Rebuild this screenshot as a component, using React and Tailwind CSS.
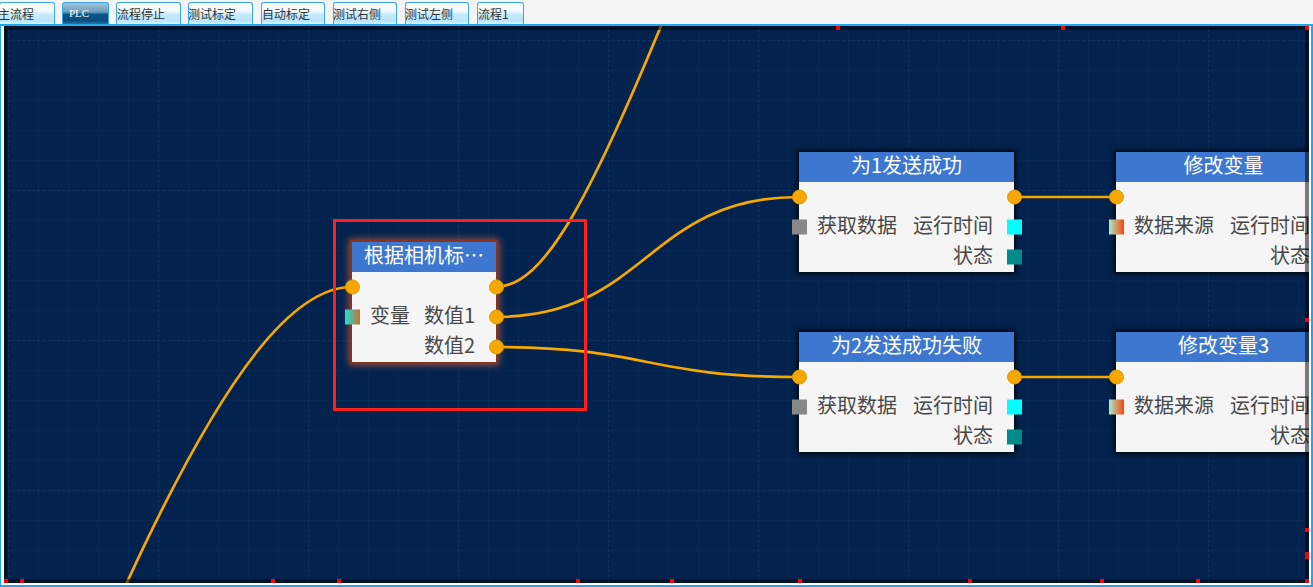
import React from 'react';

const tabs = [
  { label: '主流程', cls: 'ml-[-1px] w-[56px]', text: 'ml-[-2px]' },
  { label: 'PLC', cls: 'ml-[7px] w-[47px]', text: 'ml-[6px]', active: true },
  { label: '流程停止', cls: 'ml-[7px] w-[65px]', text: 'ml-0' },
  { label: '测试标定', cls: 'ml-[7px] w-[65px]', text: 'ml-[-1px]' },
  { label: '自动标定', cls: 'ml-[8px] w-[64px]', text: 'ml-0' },
  { label: '测试右侧', cls: 'ml-[8px] w-[64px]', text: 'ml-[-1px]' },
  { label: '测试左侧', cls: 'ml-[8px] w-[64px]', text: 'ml-[-1px]' },
  { label: '流程1', cls: 'ml-[8px] w-[47px]', text: 'ml-0' },
];

const redMarks = [
  'top-0 left-[832px] w-[4px] h-[4px]',
  'top-0 left-[1057px] w-[4px] h-[4px]',
  'top-0 right-0 w-[4px] h-[4px]',
  'top-[292px] right-0 w-[4px] h-[4px]',
  'top-[502px] right-0 w-[4px] h-[4px]',
  'top-[526px] right-0 w-[4px] h-[7px]',
  'bottom-0 right-0 w-[4px] h-[4px]',
  'bottom-0 left-0 w-[4px] h-[4px]',
  'bottom-0 left-[16px] w-[4px] h-[4px]',
  'bottom-0 left-[267px] w-[4px] h-[4px]',
  'bottom-0 left-[333px] w-[4px] h-[4px]',
  'bottom-0 left-[572px] w-[4px] h-[4px]',
  'bottom-0 left-[666px] w-[4px] h-[4px]',
  'bottom-0 left-[794px] w-[4px] h-[4px]',
  'bottom-0 left-[964px] w-[4px] h-[4px]',
  'bottom-0 left-[1096px] w-[4px] h-[4px]',
  'bottom-0 left-[1192px] w-[4px] h-[4px]',
];

const GRAY = 'bg-[#888888]';
const CYAN = 'bg-[#00ffff]';
const TEAL = 'bg-[#008b8b]';
const VAR_GRAD = 'bg-[linear-gradient(90deg,#19e6da,#c86d2c)]';
const SRC_GRAD = 'bg-[linear-gradient(90deg,#a3efcc,#ff4308)]';

const Circle = ({ side }) => (
  <span
    className={
      'absolute top-1/2 -translate-y-1/2 w-[15px] h-[15px] rounded-full bg-[#f7a800] border border-[#e59b00] ' +
      (side === 'left' ? 'left-[-7px]' : 'right-[-8px]')
    }
  />
);

const Swatch = ({ side, color }) => (
  <span
    className={
      'absolute top-1/2 -translate-y-1/2 w-[15px] h-[15px] ' +
      color +
      ' ' +
      (side === 'left' ? 'left-[-7px]' : 'right-[-8px]')
    }
  />
);

const Row = ({ row }) => (
  <div className="relative h-[30px] flex items-center pl-[18px] pr-[21px] pb-[4px]">
    {row.inPort && <Circle side="left" />}
    {row.outPort && <Circle side="right" />}
    {row.left && <Swatch side="left" color={row.left.swatch} />}
    {row.right && row.right.swatch && <Swatch side="right" color={row.right.swatch} />}
    {row.left && <span className="text-[20px] leading-none text-[#474747] whitespace-nowrap">{row.left.label}</span>}
    {row.right && (
      <span className="ml-auto text-[20px] leading-none text-[#474747] whitespace-nowrap">{row.right.label}</span>
    )}
  </div>
);

const FlowNode = ({ className, title, rows, selected }) => (
  <div
    className={
      'absolute ' +
      className +
      (selected
        ? ' shadow-[0_0_0_2px_#86331f,0_0_7px_3px_rgba(205,95,55,0.75)]'
        : ' shadow-[0_0_5px_2px_rgba(0,0,0,0.8)]')
    }
  >
    <div className="h-[30px] pb-[5px] bg-[#3d77d0] text-white text-[20px] leading-none flex items-center justify-center whitespace-nowrap">
      {title}
    </div>
    <div className="bg-[#f5f5f5]">
      {rows.map((r, i) => (
        <Row key={i} row={r} />
      ))}
    </div>
  </div>
);

const sendRows = [
  { inPort: true, outPort: true },
  { left: { label: '获取数据', swatch: GRAY }, right: { label: '运行时间', swatch: CYAN } },
  { right: { label: '状态', swatch: TEAL } },
];

const modifyRows = [
  { inPort: true },
  { left: { label: '数据来源', swatch: SRC_GRAD }, right: { label: '运行时间', swatch: CYAN } },
  { right: { label: '状态', swatch: TEAL } },
];

const wires = [
  'M352,287 C300,287 230,350 110,620',
  'M495,287 C545,287 590,200 680,-20',
  'M495,317 C647,317 647,197 799,197',
  'M495,347 C647,347 647,377 799,377',
  'M1014,197 L1116,197',
  'M1014,377 L1116,377',
];

export default function App() {
  return (
    <div
      className="w-[1313px] h-[587px] overflow-hidden bg-[#f4f4f4]"
      style={{ fontFamily: '"Noto Sans CJK SC", "Noto Sans", sans-serif' }}
    >
      {/* tab strip */}
      <div className="h-[24px] flex items-end overflow-hidden">
        {tabs.map((t) => (
          <div
            key={t.label}
            className={
              'h-[22px] shrink-0 rounded-t-[3px] border border-b-0 border-[#38a6e8] overflow-hidden flex items-center text-[12px] leading-none ' +
              t.cls +
              (t.active
                ? ' bg-[linear-gradient(180deg,#a4c4d8_0%,#6a9dbe_42%,#0a5487_55%,#074e7e_85%,#2c76a3_100%)] text-white'
                : ' bg-[linear-gradient(180deg,#ffffff_0%,#f0fafe_40%,#c6ebfb_55%,#b9e5fa_85%,#dcf4fe_100%)] text-[#333]')
            }
          >
            <span
              className={'whitespace-nowrap ' + t.text}
              style={t.active ? { fontFamily: '"Liberation Serif", serif', fontSize: '11px' } : undefined}
            >
              {t.label}
            </span>
          </div>
        ))}
      </div>

      {/* canvas frame */}
      <div className="h-[563px] border-t-2 border-r-2 border-b-2 border-l border-[#1ea6ee] bg-white pl-[3px] pr-[2px] pb-[2px]">
        <div className="relative w-[1305px] h-[557px] overflow-hidden bg-[#03234e]">
          <svg className="absolute inset-0" width="1305" height="557" viewBox="4 26 1305 557">
            <defs>
              <pattern id="minor" x="8" y="40" width="30" height="30" patternUnits="userSpaceOnUse">
                <path d="M0.5,0 L0.5,30 M0,0.5 L30,0.5" stroke="#062852" strokeWidth="1" fill="none" />
              </pattern>
              <pattern id="major" x="8" y="40" width="150" height="150" patternUnits="userSpaceOnUse">
                <path
                  d="M0.5,0 L0.5,150 M0,0.5 L150,0.5"
                  stroke="#10325f"
                  strokeWidth="1.5"
                  strokeDasharray="2 3"
                  fill="none"
                />
              </pattern>
            </defs>
            <rect x="4" y="26" width="1305" height="557" fill="url(#minor)" />
            <rect x="4" y="26" width="1305" height="557" fill="url(#major)" />
            {wires.map((d) => (
              <path key={d} d={d} stroke="#f5a800" strokeWidth="2.7" fill="none" />
            ))}
          </svg>

          {/* selection frame */}
          <div className="absolute left-[329px] top-[193px] w-[254px] h-[192px] border-[3px] border-[#ff1f1f]" />

          <FlowNode
            className="left-[348px] top-[216px] w-[144px]"
            title="根据相机标…"
            selected
            rows={[
              { inPort: true, outPort: true },
              { outPort: true, left: { label: '变量', swatch: VAR_GRAD }, right: { label: '数值1' } },
              { outPort: true, right: { label: '数值2' } },
            ]}
          />
          <FlowNode className="left-[795px] top-[126px] w-[215px]" title="为1发送成功" rows={sendRows} />
          <FlowNode className="left-[795px] top-[306px] w-[215px]" title="为2发送成功失败" rows={sendRows} />
          <FlowNode className="left-[1112px] top-[126px] w-[215px]" title="修改变量" rows={modifyRows} />
          <FlowNode className="left-[1112px] top-[306px] w-[215px]" title="修改变量3" rows={modifyRows} />

          {/* edge band and off-screen markers */}
          <div className="absolute inset-0 border-4 border-black/50 pointer-events-none" />
          {redMarks.map((m) => (
            <div key={m} className={'absolute bg-[#ff0000] ' + m} />
          ))}
        </div>
      </div>
    </div>
  );
}
